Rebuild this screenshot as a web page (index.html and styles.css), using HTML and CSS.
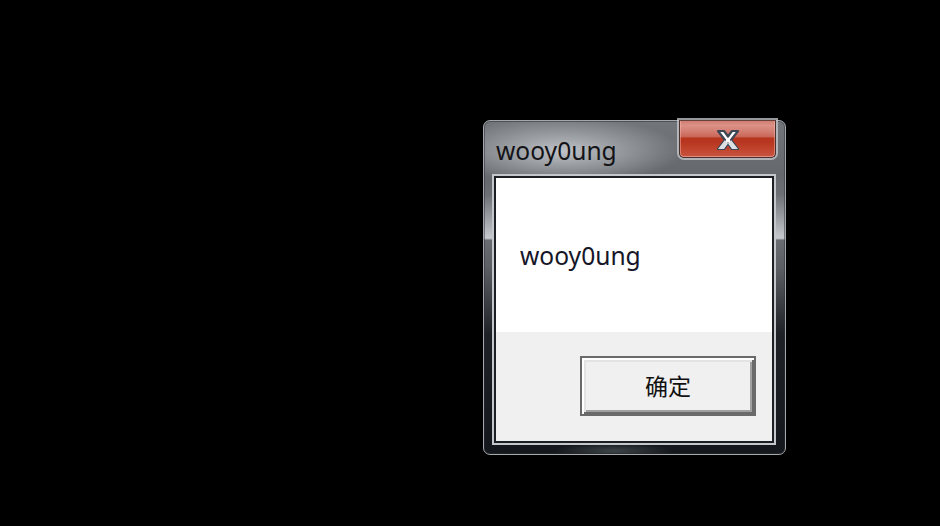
FILE: index.html
```html
<!DOCTYPE html>
<html lang="zh">
<head>
<meta charset="utf-8">
<title>wooy0ung</title>
<link rel="stylesheet" href="styles.css">
</head>
<body>
<div class="window">
  <div class="titlebar">
    <div class="title">wooy0ung</div>
    <div class="close-btn">
      <svg class="close-x" width="26" height="22" viewBox="0 0 26 22">
        <polygon points="3,2 9,2 13,7.5 17,2 23,2 16,11 23,20 17,20 13,14.5 9,20 3,20 10,11" fill="#ffffff" stroke="#3e4656" stroke-width="2.2" stroke-linejoin="round"/>
        <polygon points="10.5,12 13,14.5 15.5,12 16,11 23,20 17,20 13,14.5 9,20 3,20 10,11" fill="#dcdfe4"/>
      </svg>
    </div>
  </div>
  <div class="client">
    <div class="message">wooy0ung</div>
    <div class="footer">
      <div class="ok-btn">确定</div>
    </div>
  </div>
</div>
</body>
</html>
```

FILE: styles.css
```css
html, body {
  margin: 0;
  padding: 0;
}
body {
  background: #000;
  width: 940px;
  height: 526px;
  overflow: hidden;
  font-family: "Noto Sans", "Noto Sans CJK SC", sans-serif;
}
.window {
  box-sizing: border-box;
  margin: 120px 0 0 483px;
  width: 303px;
  height: 335px;
  border: 1px solid #a4a8ac;
  border-radius: 7px;
  display: flex;
  flex-direction: column;
  background:
    radial-gradient(ellipse 120px 34px at 78px 30px, rgba(200,204,208,0.9), rgba(200,204,208,0) 100%),
    radial-gradient(ellipse 60px 8px at 130px 330px, rgba(90,96,102,0.6), rgba(90,96,102,0)),
    linear-gradient(180deg, #72767a 0, #65696d 16%, #6c7074 22%, #c6cace 35.2%, #6a6e72 35.8%, #5c6064 44%, #1e2226 64%, #14181c 100%);
  box-shadow: inset 0 0 0 1px rgba(40,44,48,0.5);
}
.titlebar {
  height: 55px;
  flex: none;
  display: flex;
  align-items: flex-start;
}
.title {
  flex: 1;
  padding: 18px 0 0 12px;
  font-size: 24.6px;
  line-height: 24px;
  color: #141418;
}
.close-btn {
  box-sizing: border-box;
  margin: -1px 9px 0 0;
  width: 97px;
  height: 38px;
  border: 1px solid #4a302c;
  border-top-color: #6a4038;
  border-radius: 0 0 5px 5px;
  background: linear-gradient(180deg, #cf7e72 0, #dc9186 12%, #d37c70 30%, #c96657 44%, #b9361f 47%, #b73420 56%, #be4028 72%, #c85441 100%);
  box-shadow: 0 0 0 2px rgba(200,204,208,0.75), inset 1px 0 0 rgba(255,190,180,0.45), inset -1px 0 0 rgba(255,190,180,0.45), inset 0 -1px 0 rgba(255,200,190,0.5);
  display: flex;
  align-items: center;
  justify-content: center;
}
.close-x {
  display: block;
  margin-top: 1px;
}
.client {
  flex: 1;
  margin: 0 11px 11px 10px;
  border: 2px solid #1c2024;
  box-shadow: 0 0 0 2px #c4c8cc;
  display: flex;
  flex-direction: column;
  background: #fff;
}
.message {
  height: 154px;
  flex: none;
  display: flex;
  align-items: center;
  padding: 2px 0 0 24px;
  box-sizing: border-box;
  font-size: 24.6px;
  line-height: 24px;
  color: #161628;
}
.footer {
  flex: 1;
  background: #f0f0f0;
  display: flex;
  justify-content: flex-end;
  align-items: flex-start;
  padding: 24px 16px 0 0;
}
.ok-btn {
  box-sizing: border-box;
  width: 176px;
  height: 60px;
  border: 2px solid #6a6a6a;
  background: #f0f0f0;
  box-shadow: inset 2px 2px 0 #ffffff, inset -2px -2px 0 #6a6a6a, inset 4px 4px 0 #e3e3e3, inset -4px -4px 0 #a0a0a0;
  display: flex;
  align-items: center;
  justify-content: center;
  font-family: "Noto Sans CJK SC", sans-serif;
  font-size: 23px;
  line-height: 23px;
  color: #111;
  padding-bottom: 2px;
}
```
